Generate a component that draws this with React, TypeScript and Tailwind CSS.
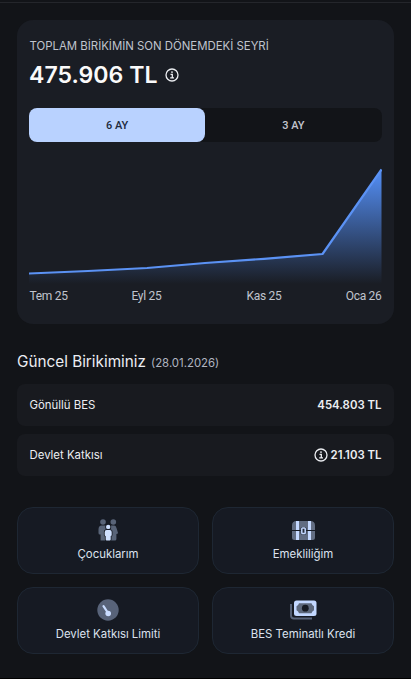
import React from "react";

const POINTS = [
  [0, 105.5],
  [59, 103],
  [118, 100],
  [176, 95],
  [235, 90.8],
  [293.5, 86],
  [352.5, 1.5],
];

export default function App() {
  const line = POINTS.map(([x, y]) => `${x},${y}`).join(" ");

  return (
    <div className="h-[679px] w-[411px] overflow-hidden border-b border-black bg-[#121418] font-['Inter',sans-serif] text-[#eceef2]">
      <div className="mt-[2px] h-px bg-[#24262b]" />

      <main className="px-[17px] pt-[17px]">
        {/* Savings trend */}
        <section className="h-[304px] rounded-2xl bg-[#1a1d24] pt-[18px] pr-[12.5px] pl-3">
          <p className="h-4 pl-[0.5px] text-[11.4px] leading-4 whitespace-nowrap text-[#c0c4cd]">TOPLAM BİRİKİMİN SON DÖNEMDEKİ SEYRİ</p>
          <div className="mt-[5px] flex h-8 items-center">
            <h1 className="text-[23.1px] leading-8 font-semibold whitespace-nowrap text-[#fafafa]">475.906 TL</h1>
            <InfoIcon className="ml-2 size-[14px]" />
          </div>

          <div className="mt-[17px] grid h-[34px] grid-cols-2 rounded-lg bg-[#121418] font-['Roboto',sans-serif] text-[11px] font-medium">
            <button className="rounded-lg bg-[#b9d2ff] pt-[2px] text-[#20293b]">6 AY</button>
            <button className="pt-[2px] text-[#c2c5ce]">3 AY</button>
          </div>

          {/* Chart */}
          <svg viewBox="0 0 352.5 116" preserveAspectRatio="none" className="mt-[26px] block h-[116px] w-full">
            <defs>
              <linearGradient id="area" x1="0" y1="0" x2="0" y2="1">
                <stop offset="0" stopColor="#5490f8" />
                <stop offset="1" stopColor="#5490f8" stopOpacity="0" />
              </linearGradient>
            </defs>
            <polygon points={`0,116 ${line} 352.5,116`} fill="url(#area)" />
            <polyline points={line} fill="none" stroke="#5b92f4" strokeWidth="2.2" strokeLinejoin="round" />
          </svg>
          <div className="mt-1 flex h-4 pl-[0.5px] font-['Roboto',sans-serif] text-[12px] leading-4 tracking-[-0.3px] text-[#c0c4cd]">
            <span className="w-[102px]">Tem 25</span>
            <span className="w-[115px]">Eyl 25</span>
            <span>Kas 25</span>
            <span className="ml-auto">Oca 26</span>
          </div>
        </section>

        {/* Current balance */}
        <h2 className="mt-[26px] flex h-6 items-baseline text-[15.3px] leading-6 whitespace-nowrap">
          Güncel Birikiminiz
          <span className="ml-[5px] text-[11.4px] text-[#b0b5c0]">(28.01.2026)</span>
        </h2>
        <div className="mt-[10px] flex flex-col gap-2">
          <BalanceRow label="Gönüllü BES" value="454.803 TL" />
          <BalanceRow label="Devlet Katkısı" value="21.103 TL" info />
        </div>

        {/* Shortcuts */}
        <div className="mt-[31px] grid grid-cols-2 gap-[13px]">
          <Shortcut icon={<ChildrenIcon />} label="Çocuklarım" />
          <Shortcut icon={<ChestIcon />} label="Emekliliğim" />
          <Shortcut icon={<GaugeIcon />} label="Devlet Katkısı Limiti" />
          <Shortcut icon={<CashIcon />} label="BES Teminatlı Kredi" />
        </div>
      </main>
    </div>
  );
}

interface BalanceRowProps {
  label: string;
  value: string;
  info?: boolean;
}

function BalanceRow({ label, value, info }: BalanceRowProps) {
  return (
    <div className="flex h-[42px] items-center justify-between rounded-lg bg-[#181a1f] px-[12.5px] pt-px text-[11.4px]">
      <span>{label}</span>
      <span className="flex items-center gap-[3px] font-semibold whitespace-nowrap">
        {info && <InfoIcon className="mb-px size-[14px]" />}
        {value}
      </span>
    </div>
  );
}

function Shortcut({ icon, label }: { icon: React.ReactNode; label: string }) {
  return (
    <button className="flex h-[67px] flex-col items-center rounded-2xl border border-[#1e2733] bg-[#161a23] pt-[10px] text-[11.4px] leading-4 text-[#dce2ef]">
      <span className="flex h-6 items-center">{icon}</span>
      <span className="mt-1 whitespace-nowrap">{label}</span>
    </button>
  );
}

function InfoIcon({ className }: { className: string }) {
  return (
    <svg viewBox="0 0 14 14" fill="none" stroke="currentColor" className={className}>
      <circle cx="7" cy="7" r="6" strokeWidth="1.3" />
      <path d="M5.5 6.4h1.8v3.4M5.2 9.9h3.8" strokeWidth="1.3" />
      <circle cx="7" cy="4.1" r="0.9" fill="currentColor" stroke="none" />
    </svg>
  );
}

function ChildrenIcon() {
  return (
    <svg viewBox="0 0 20 22" className="h-[22px] w-5">
      <g fill="#596478">
        <circle cx="5" cy="3" r="2.8" />
        <circle cx="15.3" cy="3" r="2.8" />
        <path d="M3.8 6.5h3.5q2.3 0 2.3 2v13h-7v-6H1.8q-1.3 0-1.3-1.5v-3.5q0-4 3.3-4Z" />
        <path d="M12.8 6.5h3.3q1.7 0 2.4 2.4l1.4 4.6q.3 1.5-1.5 1.5v5q0 1.5-1.5 1.5h-6.5v-13q0-2 2.4-2Z" />
      </g>
      <g fill="#cfe0ff" stroke="#161a23" strokeWidth="1.6" paintOrder="stroke">
        <path d="M8.6 11.1h3.2q1.9 0 1.9 1.9v3q0 1-1 1v3.6q0 1-1 1h-3q-1 0-1-1V17q-1 0-1-1v-3q0-1.9 1.9-1.9Z" />
        <circle cx="10.2" cy="7.9" r="2.2" />
      </g>
    </svg>
  );
}

function ChestIcon() {
  return (
    <svg viewBox="0 0 23 19" className="h-[19px] w-[23px]">
      <path d="M4.5 0h14Q23 0 23 4.5V9H0V4.5Q0 0 4.5 0ZM0 10h23v6.5q0 2.5-2.5 2.5h-18Q0 19 0 16.5Z" fill="#626d82" />
      <path d="M4 0h3v9H4ZM4 10h3v9H4ZM16 0h3v9h-3ZM16 10h3v9h-3Z" fill="#c4d8ff" />
      <rect x="8.5" y="6" width="6" height="7.5" rx="1.5" fill="#252c39" />
      <rect x="9.8" y="7" width="3.4" height="5.5" rx="0.8" fill="#252c39" stroke="#c4d8ff" strokeWidth="1.5" />
    </svg>
  );
}

function GaugeIcon() {
  return (
    <svg viewBox="0 0 22 22" className="size-[22px]">
      <circle cx="11" cy="11" r="10.7" fill="#586379" />
      <path d="M6.5 7.1 11 14" stroke="#c9dcff" strokeWidth="2.2" strokeLinecap="round" />
      <circle cx="11.2" cy="14.5" r="2.8" fill="#c9dcff" />
    </svg>
  );
}

function CashIcon() {
  return (
    <svg viewBox="0 0 27 20" className="h-5 w-[27px]">
      <path d="M1 4v11.5q0 3 3 3h18" fill="none" stroke="#586379" strokeWidth="1.9" />
      <rect x="4" y="0.5" width="22.5" height="15.5" rx="2.5" fill="#c2d7ff" />
      <path d="M9 3.2h12.5q.5 2.2 2.5 3v4q-2 .8-2.5 3H9q-.5-2.2-2.5-3v-4q2-.8 2.5-3Z" fill="#5d687c" />
      <circle cx="15.3" cy="8.2" r="3.4" fill="#161a23" />
    </svg>
  );
}
